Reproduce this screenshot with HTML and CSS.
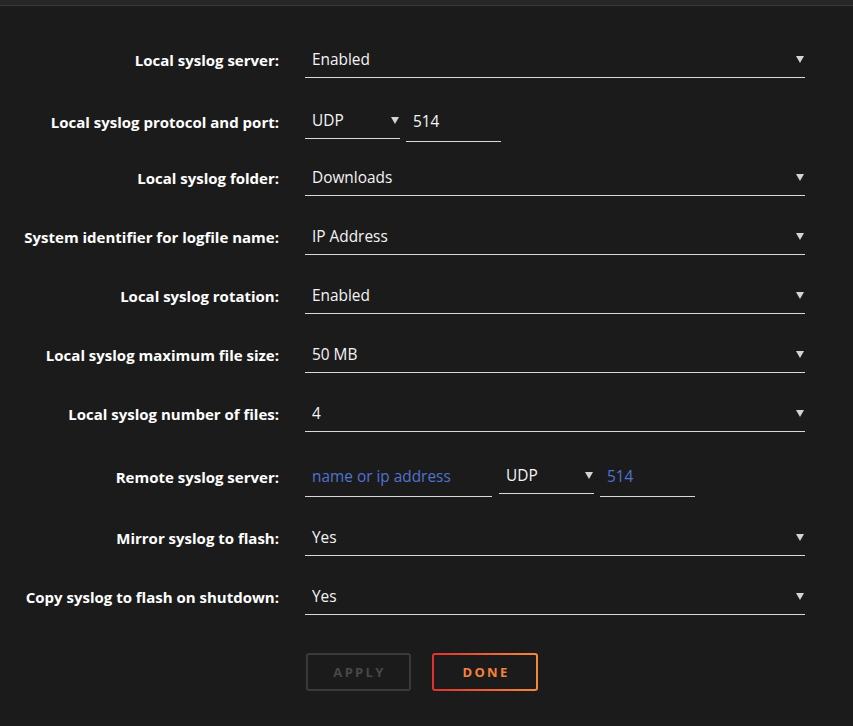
FILE: index.html
```html
<!DOCTYPE html>
<html>
<head>
<meta charset="utf-8">
<link rel="stylesheet" href="styles.css">
</head>
<body>
<div class="topbar"></div>
<form class="form">
  <div class="row">
    <label class="label">Local syslog server:</label>
    <div class="select full"><span>Enabled</span><i class="arrow"></i></div>
  </div>
  <div class="row shift">
    <label class="label">Local syslog protocol and port:</label>
    <div class="group">
      <div class="select small"><span>UDP</span><i class="arrow"></i></div>
      <div class="input small"><span>514</span></div>
    </div>
  </div>
  <div class="row">
    <label class="label">Local syslog folder:</label>
    <div class="select full"><span>Downloads</span><i class="arrow"></i></div>
  </div>
  <div class="row">
    <label class="label">System identifier for logfile name:</label>
    <div class="select full"><span>IP Address</span><i class="arrow"></i></div>
  </div>
  <div class="row">
    <label class="label">Local syslog rotation:</label>
    <div class="select full"><span>Enabled</span><i class="arrow"></i></div>
  </div>
  <div class="row">
    <label class="label">Local syslog maximum file size:</label>
    <div class="select full"><span>50 MB</span><i class="arrow"></i></div>
  </div>
  <div class="row">
    <label class="label">Local syslog number of files:</label>
    <div class="select full"><span>4</span><i class="arrow"></i></div>
  </div>
  <div class="row tall">
    <label class="label">Remote syslog server:</label>
    <div class="group">
      <div class="input host"><span class="ph">name or ip address</span></div>
      <div class="select small"><span>UDP</span><i class="arrow"></i></div>
      <div class="input small"><span class="ph">514</span></div>
    </div>
  </div>
  <div class="row">
    <label class="label">Mirror syslog to flash:</label>
    <div class="select full"><span>Yes</span><i class="arrow"></i></div>
  </div>
  <div class="row">
    <label class="label">Copy syslog to flash on shutdown:</label>
    <div class="select full"><span>Yes</span><i class="arrow"></i></div>
  </div>
  <div class="actions">
    <button type="button" class="btn apply">APPLY</button>
    <button type="button" class="btn done">DONE</button>
  </div>
</form>
</body>
</html>
```
FILE: styles.css
```css
html, body {
  margin: 0;
  padding: 0;
  background: #1c1b1c;
  font-family: "Open Sans", "Noto Sans", sans-serif;
  color: #f2f2f2;
}
.topbar {
  height: 5px;
  background: #262626;
  border-bottom: 1px solid #3a3a3a;
}
.form {
  padding-top: 36px;
}
.row {
  display: grid;
  grid-template-columns: 279px 500px;
  column-gap: 26px;
  height: 36px;
  margin-bottom: 23px;
  align-items: stretch;
}
.row.shift {
  padding-top: 2px;
  margin-bottom: 21px;
}
.row.tall {
  padding: 3px 0;
}
.label {
  display: flex;
  align-items: center;
  justify-content: flex-end;
  font-weight: 700;
  font-size: 15px;
  color: #ffffff;
  padding-bottom: 1px;
}
.group {
  display: flex;
  gap: 6px;
}
.select, .input {
  box-sizing: border-box;
  height: 36px;
  border-bottom: 1px solid #d9d9d9;
  display: flex;
  align-items: center;
  padding-left: 7px;
  font-size: 15.4px;
  color: #f4f4f4;
  position: relative;
}
.select {
  padding-bottom: 1px;
}
.input {
  height: 39px;
  padding-bottom: 1px;
}
.full { width: 500px; }
.small { width: 95px; }
.host { width: 187px; }
.group .host + .select { margin-left: 1px; }
.ph { color: #4f73cf; }
.arrow {
  position: absolute;
  right: 1px;
  top: 50%;
  margin-top: -4px;
  width: 0;
  height: 0;
  border-left: 4px solid transparent;
  border-right: 4px solid transparent;
  border-top: 7px solid #d4d4d4;
}
.actions {
  display: flex;
  gap: 21px;
  padding-left: 306px;
  padding-top: 15px;
}
.btn {
  width: 105px;
  height: 38px;
  background: transparent;
  border-radius: 3px;
  font-family: "Open Sans", "Noto Sans", sans-serif;
  font-weight: 700;
  font-size: 13px;
  letter-spacing: 2.3px;
  padding: 0 0 0 2px;
}
.apply {
  border: 2px solid #3a3a3a;
  color: #484848;
}
.done {
  border: 2px solid transparent;
  background: linear-gradient(#1c1b1c, #1c1b1c) padding-box, linear-gradient(90deg, #e2302e, #f38a3c) border-box;
  color: #f4833a;
  width: 106px;
}
```
